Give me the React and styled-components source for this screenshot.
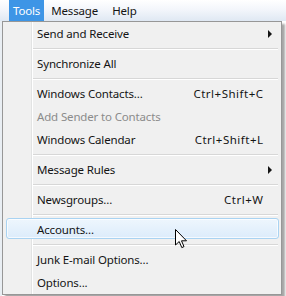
import React from "react";
import styled, { createGlobalStyle } from "styled-components";

const Global = createGlobalStyle`
  html, body { margin: 0; padding: 0; background: #eef2f6; }
  body { font-family: "Segoe UI", "Noto Sans", "Open Sans", sans-serif; font-size: 11.5px; letter-spacing: -0.15px; color: #141414; }
  #root { width: 286px; height: 296px; overflow: hidden; }
`;

const Screen = styled.div`
  position: relative;
  width: 286px;
  height: 296px;
  background: linear-gradient(90deg, #e9eef3 0, #e9eef3 2px, #ffffff 2px);
`;

const MenuBar = styled.div`
  display: flex;
  align-items: stretch;
  height: 21px;
  padding-left: 9px;
  background: linear-gradient(180deg, #ffffff 0%, #f3f6fb 45%, #dfe8f3 100%);
`;

const BarItem = styled.div`
  display: flex;
  align-items: center;
  padding: 0 ${(p) => p.$pad || 7}px;
  color: ${(p) => (p.$active ? "#ffffff" : "#141414")};
  background: ${(p) => (p.$active ? "#3d95e6" : "transparent")};
`;

const Dropdown = styled.div`
  position: absolute;
  top: 21px;
  left: 2px;
  width: 278px;
  background: #f0f0f0;
  border: 1px solid #979797;
  box-shadow: 3px 3px 2px rgba(0, 0, 0, 0.35);
  display: flex;
  flex-direction: column;
  background-image: linear-gradient(90deg, transparent 0, transparent 28px, #e2e3e3 28px, #e2e3e3 29px, #ffffff 29px, #ffffff 30px, transparent 30px);
`;

const Item = styled.div`
  position: relative;
  display: flex;
  align-items: center;
  height: 23px;
  padding: 0 18px 0 34px;
  color: ${(p) => (p.$disabled ? "#8b8b8b" : "#141414")};
`;

const Highlight = styled.div`
  position: absolute;
  left: 3px;
  right: 2px;
  top: 0;
  bottom: 2px;
  border: 1px solid #a9d3f2;
  border-radius: 3px;
  background: linear-gradient(180deg, #eef6fd 0%, #dcecfb 100%);
  box-shadow: inset 0 0 0 1px rgba(255, 255, 255, 0.7);
`;

const Label = styled.span`
  position: relative;
  flex: 1;
  white-space: nowrap;
`;

const Shortcut = styled.span`
  position: relative;
  white-space: nowrap;
  letter-spacing: 0.5px;
  margin-right: -0.5px;
`;

const Arrow = styled.span`
  position: relative;
  width: 0;
  height: 0;
  margin-right: -9px;
  border-top: 4px solid transparent;
  border-bottom: 4px solid transparent;
  border-left: 4px solid #141414;
`;

const Separator = styled.div`
  height: 7px;
  display: flex;
  align-items: center;
  padding-left: 30px;
  padding-right: 3px;
  &::after {
    content: "";
    flex: 1;
    border-top: 1px solid #d7d7d7;
    border-bottom: 1px solid #ffffff;
    height: 0;
  }
`;

const Cursor = styled.svg`
  position: absolute;
  left: 175px;
  top: 229px;
`;

const rows = [
  { label: "Send and Receive", sub: true },
  { sep: true },
  { label: "Synchronize All" },
  { sep: true },
  { label: "Windows Contacts...", key: "Ctrl+Shift+C" },
  { label: "Add Sender to Contacts", disabled: true },
  { label: "Windows Calendar", key: "Ctrl+Shift+L" },
  { sep: true },
  { label: "Message Rules", sub: true },
  { sep: true },
  { label: "Newsgroups...", key: "Ctrl+W" },
  { sep: true },
  { label: "Accounts...", hot: true },
  { sep: true },
  { label: "Junk E-mail Options..." },
  { label: "Options..." },
];

export default function App() {
  return (
    <>
      <Global />
      <Screen>
        <MenuBar>
          <BarItem $active $pad={4}>Tools</BarItem>
          <BarItem>Message</BarItem>
          <BarItem>Help</BarItem>
        </MenuBar>
        <Dropdown>
          {rows.map((r, i) =>
            r.sep ? (
              <Separator key={i} />
            ) : (
              <Item key={i} $disabled={r.disabled}>
                {r.hot && <Highlight />}
                <Label>{r.label}</Label>
                {r.key && <Shortcut>{r.key}</Shortcut>}
                {r.sub && <Arrow />}
              </Item>
            )
          )}
        </Dropdown>
        <Cursor width="13" height="20" viewBox="0 0 13 20">
          <path
            d="M0.5 0.5 L0.5 16 L4.2 12.5 L6.8 18.6 L9 17.6 L6.5 11.8 L11.5 11.8 Z"
            fill="#ffffff"
            stroke="#000000"
            strokeWidth="1"
            strokeLinejoin="miter"
          />
        </Cursor>
      </Screen>
    </>
  );
}
